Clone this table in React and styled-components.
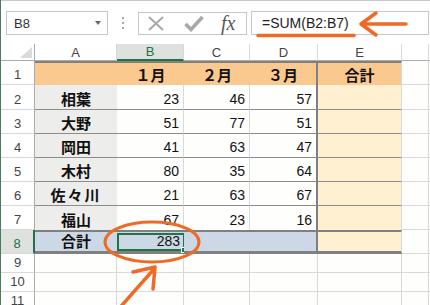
import React from 'react';
import styled, { createGlobalStyle } from 'styled-components';

const JP = '"Noto Sans CJK JP", "Noto Sans", sans-serif';
const SANS = '"Liberation Sans", Arial, sans-serif';
const GREEN = '#217346';
const ORANGE = '#ee6b26';
const GRID = '1px solid #d9d9d9';
const THICK = '2px solid #808080';
const ROWLINE = '1px solid #8c8c8c';

const GlobalStyle = createGlobalStyle`
  html, body {
    margin: 0;
    padding: 0;
    background: #fff;
  }
  body {
    font-family: ${SANS};
  }
`;

const Window = styled.div`
  position: relative;
  width: 430px;
  height: 305px;
  overflow: hidden;
  box-sizing: border-box;
  background: #fff;
  border-left: 1px solid #4d7a5e;
`;

const FormulaBar = styled.div`
  height: 44px;
  box-sizing: border-box;
  display: flex;
  align-items: flex-start;
  padding-top: 10px;
  border-top: 1px solid #c8c8c8;
`;

const NameBox = styled.div`
  width: 102px;
  height: 24px;
  margin-left: 5px;
  box-sizing: border-box;
  border: 1px solid #c6c6c6;
  display: flex;
  align-items: center;
  justify-content: space-between;
  padding: 0 6px 0 7px;
  font-size: 13px;
  color: #333;
`;

const DropArrow = styled.span`
  width: 0;
  height: 0;
  border-left: 3px solid transparent;
  border-right: 3px solid transparent;
  border-top: 4px solid #6a6a6a;
`;

const Grip = styled.div`
  width: 30px;
  height: 24px;
  display: flex;
  flex-direction: column;
  align-items: center;
  justify-content: center;
  gap: 3px;
`;

const GripDot = styled.span`
  width: 2px;
  height: 2px;
  background: #a8a8a8;
`;

const ButtonBox = styled.div`
  width: 109px;
  height: 23px;
  margin-top: 1px;
  box-sizing: border-box;
  border: 1px solid #c6c6c6;
  display: flex;
  align-items: center;
  padding-left: 9px;
`;

const IconSlot = styled.span`
  display: flex;
  margin-right: ${({ $gap }) => $gap}px;
`;

const Fx = styled.span`
  font-family: "Liberation Serif", serif;
  font-style: italic;
  font-size: 20px;
  line-height: 20px;
  color: #5a5a5a;
  margin-top: -2px;
`;

const FormulaInput = styled.div`
  flex: 1;
  height: 24px;
  margin: 0 1px 0 4px;
  box-sizing: border-box;
  border: 1px solid #c6c6c6;
  display: flex;
  align-items: center;
  padding-left: 10px;
  font-size: 14px;
  color: #222;
`;

const Sheet = styled.div`
  display: grid;
  grid-template-columns: 34px 82px 67px 66px 68px 84px 27px 1fr;
  grid-template-rows: 17px 24px 25px repeat(6, 24px) repeat(3, 19px);
`;

const Corner = styled.div`
  position: relative;
  box-sizing: border-box;
  border-right: 1px solid #ababab;
  border-bottom: 1px solid #ababab;
  background: #fff;

  &::after {
    content: '';
    position: absolute;
    right: 2px;
    bottom: 2px;
    width: 12px;
    height: 11px;
    background: #dadada;
    clip-path: polygon(100% 0, 100% 100%, 0 100%);
  }
`;

const ColHead = styled.div`
  box-sizing: border-box;
  display: flex;
  align-items: center;
  justify-content: center;
  font-size: 13px;
  color: ${({ $selected }) => ($selected ? GREEN : '#444')};
  background: ${({ $selected }) => ($selected ? '#dfe1df' : '#fff')};
  border-right: 1px solid #d9d9d9;
  border-bottom: ${({ $selected }) => ($selected ? `2px solid ${GREEN}` : '1px solid #ababab')};
`;

const RowHead = styled.div`
  box-sizing: border-box;
  display: flex;
  align-items: flex-end;
  justify-content: center;
  padding-bottom: 1px;
  font-size: 13px;
  line-height: 16px;
  color: ${({ $selected }) => ($selected ? GREEN : '#444')};
  background: ${({ $selected }) => ($selected ? '#dfe1df' : '#fff')};
  border-right: ${({ $selected }) => ($selected ? `2px solid ${GREEN}` : '1px solid #ababab')};
  border-bottom: 1px solid #d9d9d9;
`;

const Cell = styled.div`
  position: relative;
  box-sizing: border-box;
  display: flex;
  align-items: flex-end;
  justify-content: ${({ $center }) => ($center ? 'center' : 'flex-end')};
  padding: 0 4px 2px;
  background: ${({ $bg }) => $bg || '#fefefd'};
  border-top: ${({ $top }) => $top || 'none'};
  border-right: ${({ $right }) => $right || GRID};
  border-bottom: ${({ $bottom }) => $bottom || GRID};
  font-family: ${({ $jp }) => ($jp ? JP : SANS)};
  font-size: ${({ $jp }) => ($jp ? '15px' : '14px')};
  font-weight: ${({ $jp }) => ($jp ? 700 : 400)};
  letter-spacing: ${({ $spread }) => ($spread ? '2px' : '0')};
  line-height: 16px;
  color: #111;
  white-space: nowrap;
`;

const Selected = styled(Cell)`
  &::before {
    content: '';
    position: absolute;
    top: 1px;
    left: 0;
    right: -1px;
    bottom: 0;
    border: 2px solid ${GREEN};
  }
  &::after {
    content: '';
    position: absolute;
    right: -3px;
    bottom: -2px;
    width: 4px;
    height: 4px;
    background: ${GREEN};
    border: 1px solid #fff;
  }
`;

const Overlay = styled.svg`
  position: absolute;
  top: 0;
  left: -1px;
  pointer-events: none;
`;

const ORANGE_BG = '#fac98f';
const GRAY_BG = '#edeeeb';
const BLUE_BG = '#cdd8e6';
const CREAM_BG = '#fff0d2';

const people = [
  ['相葉', 23, 46, 57],
  ['大野', 51, 77, 51],
  ['岡田', 41, 63, 47],
  ['木村', 80, 35, 64],
  ['佐々川', 21, 63, 67],
  ['福山', 67, 23, 16],
];

const columns = ['A', 'B', 'C', 'D', 'E', '', ''];

const Filler = () => (
  <>
    <Cell />
    <Cell />
  </>
);

export default function App() {
  return (
    <>
      <GlobalStyle />
      <Window>
        <FormulaBar>
          <NameBox>
            B8
            <DropArrow />
          </NameBox>
          <Grip>
            <GripDot />
            <GripDot />
            <GripDot />
          </Grip>
          <ButtonBox>
            <IconSlot $gap={20}>
              <svg width="16" height="15" viewBox="0 0 16 15">
                <path d="M1 1 L15 14 M15 1 L1 14" stroke="#a8a8a8" strokeWidth="2" fill="none" />
              </svg>
            </IconSlot>
            <IconSlot $gap={17}>
              <svg width="20" height="17" viewBox="0 0 20 17">
                <path d="M1.5 9 L7 14.5 L18.5 2" stroke="#a8a8a8" strokeWidth="3.6" fill="none" />
              </svg>
            </IconSlot>
            <Fx>fx</Fx>
          </ButtonBox>
          <FormulaInput>=SUM(B2:B7)</FormulaInput>
        </FormulaBar>

        <Sheet>
          <Corner />
          {columns.map((c, i) => (
            <ColHead key={i} $selected={c === 'B'}>
              {c}
            </ColHead>
          ))}

          <RowHead>1</RowHead>
          <Cell $bg={ORANGE_BG} $top={THICK} $right="none" $bottom="none" />
          <Cell $bg={ORANGE_BG} $top={THICK} $right="none" $bottom="none" $jp $center>１月</Cell>
          <Cell $bg={ORANGE_BG} $top={THICK} $right="none" $bottom="none" $jp $center>２月</Cell>
          <Cell $bg={ORANGE_BG} $top={THICK} $right={THICK} $bottom="none" $jp $center>３月</Cell>
          <Cell $bg={ORANGE_BG} $top={THICK} $bottom="none" $jp $center>合計</Cell>
          <Filler />

          {people.map(([name, a, b, c], i) => {
            const bottom = i === people.length - 1 ? 'none' : ROWLINE;
            return (
              <React.Fragment key={name}>
                <RowHead>{i + 2}</RowHead>
                <Cell $bg={GRAY_BG} $right="none" $bottom={bottom} $jp $center $spread={name.length > 2}>
                  {name}
                </Cell>
                <Cell $bottom={bottom}>{a}</Cell>
                <Cell $bottom={bottom}>{b}</Cell>
                <Cell $right={THICK} $bottom={bottom}>{c}</Cell>
                <Cell $bg={CREAM_BG} $bottom={bottom} />
                <Filler />
              </React.Fragment>
            );
          })}

          <RowHead $selected>8</RowHead>
          <Cell $bg={BLUE_BG} $top={THICK} $right="none" $bottom="3px solid #808080" $jp $center>合計</Cell>
          <Selected $bg={BLUE_BG} $top={THICK} $right="none" $bottom="3px solid #808080">283</Selected>
          <Cell $bg={BLUE_BG} $top={THICK} $right="none" $bottom="3px solid #808080" />
          <Cell $bg={BLUE_BG} $top={THICK} $right={THICK} $bottom="3px solid #808080" />
          <Cell $bg={CREAM_BG} $top={THICK} $bottom="3px solid #808080" />
          <Filler />

          {[9, 10, 11].map((n) => (
            <React.Fragment key={n}>
              <RowHead>{n}</RowHead>
              <Cell />
              <Cell />
              <Cell />
              <Cell />
              <Cell />
              <Filler />
            </React.Fragment>
          ))}
        </Sheet>

        <Overlay width="430" height="305" viewBox="0 0 430 305">
          <g stroke={ORANGE} fill="none" strokeWidth="3.5" strokeLinecap="round" strokeLinejoin="round">
            <path d="M258 35.5 L354 35.5" />
            <path d="M361 24 L406 24 M376 13 L361 24 L376 35" />
            <ellipse cx="152" cy="242" rx="47" ry="20" strokeWidth="3" />
            <path d="M116 312 L154 269 M133 272 L155 267 L153 289" />
          </g>
        </Overlay>
      </Window>
    </>
  );
}
